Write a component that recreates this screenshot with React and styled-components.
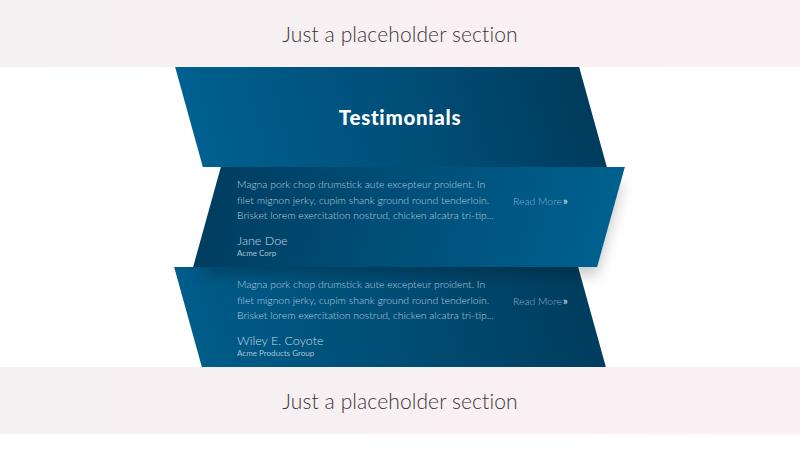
import React from "react";
import styled, { createGlobalStyle } from "styled-components";

const testimonials = [
  {
    lines: [
      "Magna pork chop drumstick aute excepteur proident. In",
      "filet mignon jerky, cupim shank ground round tenderloin.",
      "Brisket lorem exercitation nostrud, chicken alcatra tri-tip...",
    ],
    name: "Jane Doe",
    company: "Acme Corp",
  },
  {
    lines: [
      "Magna pork chop drumstick aute excepteur proident. In",
      "filet mignon jerky, cupim shank ground round tenderloin.",
      "Brisket lorem exercitation nostrud, chicken alcatra tri-tip...",
    ],
    name: "Wiley E. Coyote",
    company: "Acme Products Group",
  },
];

const GlobalStyle = createGlobalStyle`
  body {
    margin: 0;
    background: #fff;
    font-family: Lato, "Open Sans", sans-serif;
  }
`;

const Placeholder = styled.section`
  height: 67px;
  display: flex;
  align-items: center;
  justify-content: center;
  background: linear-gradient(90deg, #f5f0f2 0%, #f8f0f3 60%, #fcf0f5 100%);

  h2 {
    margin: 0;
    font-weight: 300;
    font-size: 21px;
    color: #383638;
    letter-spacing: 0.1px;
  }
`;

const Testimonials = styled.section`
  height: 300px;
  background: #fff;
`;

const Stack = styled.div`
  width: 440px;
  margin: 0 auto;
`;

const Panel = styled.div`
  position: relative;
  z-index: ${({ $layer }) => $layer};
  width: 404px;
  height: 100px;
  margin-left: ${({ $shift }) => $shift}px;
  box-sizing: border-box;

  &::before {
    content: "";
    position: absolute;
    inset: 0;
    transform: skewX(${({ $skew }) => $skew}deg);
    background: ${({ $bg }) => $bg};
    box-shadow: ${({ $shadow }) => $shadow || "none"};
  }
`;

const Heading = styled(Panel)`
  display: flex;
  align-items: center;
  justify-content: center;

  h1 {
    position: relative;
    margin: 0 0 0 18px;
    color: #fff;
    font-family: Lato, sans-serif;
    font-weight: 900;
    font-size: 20.5px;
    letter-spacing: 0.7px;
  }
`;

const Card = styled(Panel)`
  display: flex;
  flex-direction: column;
  padding: 10px 0 0 ${({ $shift }) => 57 - $shift}px;
`;

const Body = styled.div`
  position: relative;
  display: flex;
  align-items: center;
`;

const Quote = styled.p`
  margin: 0;
  width: 276px;
  font-size: 10.4px;
  line-height: 15.5px;
  font-weight: 300;
  color: #b9cee0;
  white-space: nowrap;

  span {
    display: block;
  }
`;

const ReadMore = styled.a`
  font-size: 10.4px;
  font-weight: 300;
  color: #86add0;
  text-decoration: none;

  b {
    color: #d6e5f1;
    font-size: 12px;
    margin-left: 1px;
  }
`;

const Author = styled.div`
  position: relative;
  margin-top: 10px;

  h3 {
    margin: 0;
    font-size: 12.5px;
    line-height: 14px;
    font-weight: 300;
    color: #c9d8e5;
  }
  p {
    margin: 0;
    font-size: 8px;
    line-height: 10px;
    color: #a9c1d5;
  }
`;

const cardStyles = [
  {
    shift: 27,
    skew: -15.5,
    layer: 2,
    bg: "linear-gradient(90deg, #003e61 0%, #004e77 45%, #00608e 100%)",
    shadow: "6px 12px 14px -4px rgba(0, 0, 0, 0.22)",
  },
  {
    shift: 8,
    skew: 15.5,
    layer: 1,
    bg: "linear-gradient(90deg, #005c89 0%, #004d75 50%, #003d5e 100%)",
  },
];

export default function App() {
  return (
    <>
      <GlobalStyle />
      <Placeholder>
        <h2>Just a placeholder section</h2>
      </Placeholder>
      <Testimonials>
        <Stack>
          <Heading
            $shift={9}
            $skew={15.5}
            $layer={3}
            $bg="linear-gradient(90deg, #00608f 0%, #004e78 55%, #003c5c 100%)"
          >
            <h1>Testimonials</h1>
          </Heading>
          {testimonials.map((t, i) => {
            const s = cardStyles[i];
            return (
              <Card
                key={t.name}
                $shift={s.shift}
                $skew={s.skew}
                $layer={s.layer}
                $bg={s.bg}
                $shadow={s.shadow}
              >
                <Body>
                  <Quote>
                    {t.lines.map((l) => (
                      <span key={l}>{l}</span>
                    ))}
                  </Quote>
                  <ReadMore href="#">
                    Read More<b>»</b>
                  </ReadMore>
                </Body>
                <Author>
                  <h3>{t.name}</h3>
                  <p>{t.company}</p>
                </Author>
              </Card>
            );
          })}
        </Stack>
      </Testimonials>
      <Placeholder>
        <h2>Just a placeholder section</h2>
      </Placeholder>
    </>
  );
}
